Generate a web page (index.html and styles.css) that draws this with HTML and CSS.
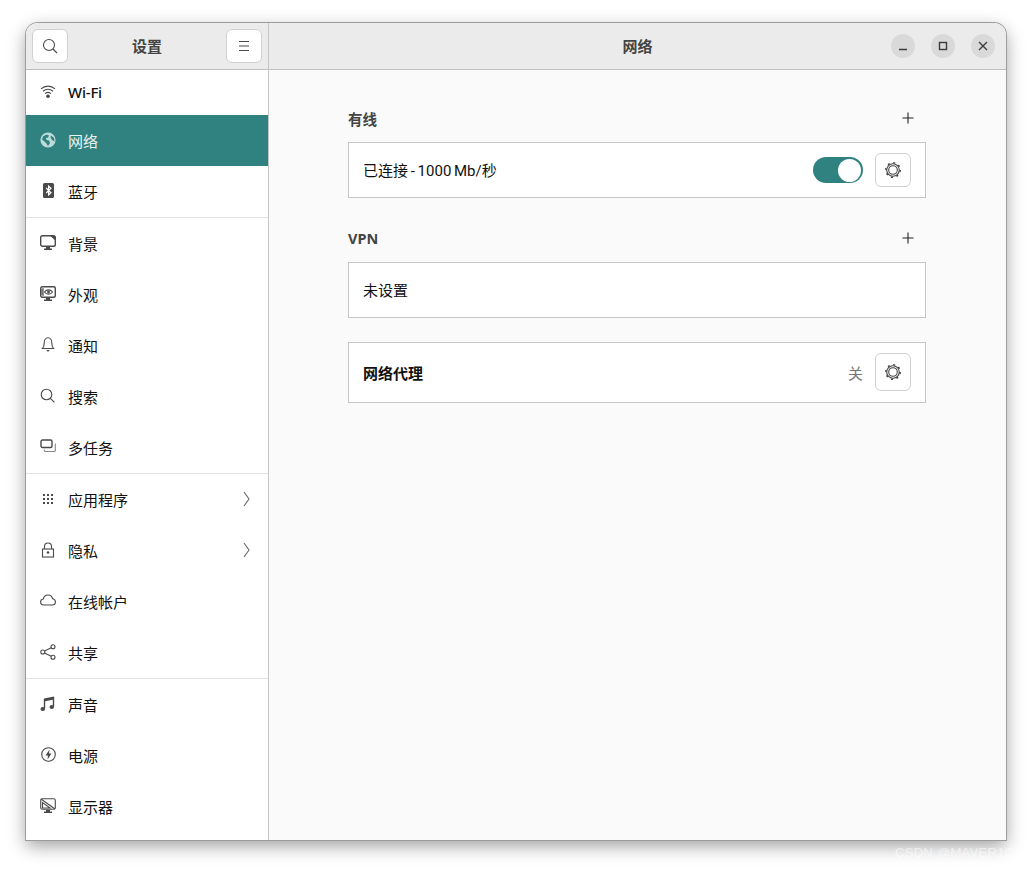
FILE: index.html
```html
<!DOCTYPE html>
<html lang="zh-CN">
<head>
    <meta charset="UTF-8">
    <title>设置 - 网络</title>
    <link rel="stylesheet" href="styles.css">
</head>
<body>
    <div class="window">
        <aside class="sidebar">
            <header class="side-header">
                <button class="head-btn">
                    <svg class="icon" viewBox="0 0 16 16"><circle cx="7" cy="7" r="5.500" class="line thin"/><path d="M11 11l4 4" class="line thin"/></svg>
                </button>
                <span class="head-title">设置</span>
                <button class="head-btn">
                    <svg class="icon" viewBox="0 0 16 16"><path d="M3 3.500h10M3 8h10M3 12.500h10" class="line thin"/></svg>
                </button>
            </header>
            <nav class="nav">
                <div class="nav-group">
                    <div class="nav-item nav-item-first">
                        <svg class="icon" viewBox="0 0 16 16"><path d="M1 4.800C5 1.200 11 1.200 15 4.800M3 7.200C6 4.800 10 4.800 13 7.200M5 9.600C6.800 8.200 9.200 8.200 11 9.600" class="line thin"/><circle cx="8" cy="12.200" r="1.800" class="fill"/></svg>
                        <span class="latin">Wi-Fi</span>
                    </div>
                    <div class="nav-item selected">
                        <svg class="icon" viewBox="0 0 16 16"><circle cx="8" cy="8" r="7.600" class="fill"/><path d="M3 4.500L6.500 2.500L9 3.500L8 5.500L6 6L6.500 8L9 8.500L10 11L8 14L6.500 11.500L4.500 9.500L2 7.500ZM11 3.500L14 6L14.500 9.500L12 8L10.500 5.500Z" class="cut"/></svg>
                        <span>网络</span>
                    </div>
                    <div class="nav-item">
                        <svg class="icon" viewBox="0 0 16 16"><rect x="3" y="0" width="11" height="15" rx="1.500" class="fill"/><path d="M6.200 5L11 9.800L8.600 12V3L11 5.200L6.200 10" class="line white"/></svg>
                        <span>蓝牙</span>
                    </div>
                </div>
                <div class="nav-group">
                    <div class="nav-item">
                        <svg class="icon" viewBox="0 0 16 16"><rect x="0.700" y="0.700" width="14.600" height="10.600" rx="1.800" class="line"/><path d="M10 0.700h3.500a1.800 1.800 0 0 1 1.800 1.800v3z" class="fill"/><path d="M6 12h4v1.500h2V15H4v-1.500h2z" class="fill"/></svg>
                        <span>背景</span>
                    </div>
                    <div class="nav-item">
                        <svg class="icon" viewBox="0 0 16 16"><rect x="0.700" y="0.700" width="14.600" height="10.600" rx="1.500" class="line"/><path d="M3 2v8M1 4h2M1 6h2M1 8h2" class="line thin"/><path d="M4.500 6C6.500 3.200 10.500 3.200 12.500 6C10.500 8.800 6.500 8.800 4.500 6Z" class="line thin"/><circle cx="8.500" cy="6" r="1.400" class="fill"/><path d="M6 12h4v1.500h2V15H4v-1.500h2z" class="fill"/></svg>
                        <span>外观</span>
                    </div>
                    <div class="nav-item">
                        <svg class="icon" viewBox="0 0 16 16"><path d="M2.500 11.500C3.800 10.200 4.200 9.200 4.200 6C4.200 2.800 6 .7 8 .7C10 .7 11.800 2.800 11.800 6C11.800 9.200 12.200 10.200 13.500 11.500Z" class="line thin"/><path d="M6.800 13h2.400v1.400H6.800z" class="fill"/></svg>
                        <span>通知</span>
                    </div>
                    <div class="nav-item">
                        <svg class="icon" viewBox="0 0 16 16"><circle cx="6.500" cy="6.500" r="5.300" class="line thin"/><path d="M10.400 10.400l4 4" class="line thin"/></svg>
                        <span>搜索</span>
                    </div>
                    <div class="nav-item">
                        <svg class="icon" viewBox="0 0 16 16"><rect x="1" y="1" width="11" height="7.500" rx="1.500" class="line"/><path d="M15.300 4.500v7a1 1 0 0 1-1 1h-9a1 1 0 0 1-1-1v-1" class="line thin soft"/></svg>
                        <span>多任务</span>
                    </div>
                </div>
                <div class="nav-group">
                    <div class="nav-item">
                        <svg class="icon" viewBox="0 0 16 16"><path d="M3 3h2v2H3zM7 3h2v2H7zM11 3h2v2h-2zM3 7h2v2H3zM7 7h2v2H7zM11 7h2v2h-2zM3 11h2v2H3zM7 11h2v2H7zM11 11h2v2h-2z" class="fill"/></svg>
                        <span>应用程序</span>
                        <svg class="chevron" viewBox="0 0 8 16"><path d="M1 1l5 7l-5 7" class="line thin"/></svg>
                    </div>
                    <div class="nav-item">
                        <svg class="icon" viewBox="0 0 16 16"><rect x="2.500" y="7" width="11" height="8" class="line thin"/><path d="M4.500 7V4.500a3.500 3.500 0 0 1 7 0V7" class="line thin"/><circle cx="8" cy="10.500" r="1.300" class="fill"/></svg>
                        <span>隐私</span>
                        <svg class="chevron" viewBox="0 0 8 16"><path d="M1 1l5 7l-5 7" class="line thin"/></svg>
                    </div>
                    <div class="nav-item">
                        <svg class="icon" viewBox="0 0 16 16"><path d="M4 12C2 12 .6 10.600 .6 9C.6 7.400 1.800 6.200 3.200 6C3.800 3.600 5.600 2 8 2C10.200 2 12 3.400 12.600 5.800C14.200 6 15.400 7.400 15.400 9C15.400 10.800 14 12 12.200 12Z" class="line thin"/></svg>
                        <span>在线帐户</span>
                    </div>
                    <div class="nav-item">
                        <svg class="icon" viewBox="0 0 16 16"><circle cx="2.800" cy="8" r="2" class="line thin"/><circle cx="13" cy="2.800" r="2" class="line thin"/><circle cx="13" cy="13.200" r="2" class="line thin"/><path d="M4.600 7L11.200 3.800M4.600 9L11.200 12.200" class="line thin"/></svg>
                        <span>共享</span>
                    </div>
                </div>
                <div class="nav-group">
                    <div class="nav-item">
                        <svg class="icon" viewBox="0 0 16 16"><path d="M4.500 3V12.500M13.500 1V10.500" class="line"/><path d="M4 2.500L14 .5V3.500L4 5.500Z" class="fill"/><ellipse cx="2.800" cy="13" rx="2.300" ry="2" class="fill"/><ellipse cx="11.800" cy="11" rx="2.300" ry="2" class="fill"/></svg>
                        <span>声音</span>
                    </div>
                    <div class="nav-item">
                        <svg class="icon" viewBox="0 0 16 16"><circle cx="8.500" cy="7.500" r="6.800" class="line thin"/><path d="M9.500 2.500L5.500 8.500h2.500L7.500 12.500l4-6H9z" class="fill"/></svg>
                        <span>电源</span>
                    </div>
                    <div class="nav-item">
                        <svg class="icon" viewBox="0 0 16 16"><rect x="0.700" y="0.700" width="14.600" height="10.600" rx="1.500" class="line thin"/><path d="M1 1L15 11M2.500 4.500V10H10Z" class="line thin"/><path d="M6 12h4v1.500h2V15H4v-1.500h2z" class="fill"/></svg>
                        <span>显示器</span>
                    </div>
                </div>
            </nav>
        </aside>

        <div class="panel">
            <header class="panel-header">
                <span class="head-title">网络</span>
                <div class="win-controls">
                    <button class="win-btn">
                        <svg class="win-icon" viewBox="0 0 16 16"><path d="M4 11.500h8" class="line"/></svg>
                    </button>
                    <button class="win-btn">
                        <svg class="win-icon" viewBox="0 0 16 16"><rect x="4.500" y="4.500" width="7" height="7" class="line"/></svg>
                    </button>
                    <button class="win-btn">
                        <svg class="win-icon" viewBox="0 0 16 16"><path d="M4 4l8 8M12 4l-8 8" class="line"/></svg>
                    </button>
                </div>
            </header>
            <main class="content">
                <div class="section-head">
                    <h2>有线</h2>
                    <svg class="plus" viewBox="0 0 12 12"><path d="M6 .5v11M.5 6h11" class="line thin"/></svg>
                </div>
                <div class="card">
                    <span class="card-text">已连接 - 1000 Mb/秒</span>
                    <span class="switch"><span class="knob"></span></span>
                    <button class="gear-btn">
                        <svg class="gear" viewBox="0 0 16 16"><circle cx="8" cy="8" r="6.300" class="line thin"/><circle cx="8" cy="8" r="4.300" class="line thin"/><circle cx="8" cy="8" r="7.200" class="teeth"/></svg>
                    </button>
                </div>

                <div class="section-head section-gap">
                    <h2>VPN</h2>
                    <svg class="plus" viewBox="0 0 12 12"><path d="M6 .5v11M.5 6h11" class="line thin"/></svg>
                </div>
                <div class="card">
                    <span class="card-text">未设置</span>
                </div>

                <div class="card card-tall">
                    <span class="card-text bold">网络代理</span>
                    <span class="status">关</span>
                    <button class="gear-btn gear-tall">
                        <svg class="gear" viewBox="0 0 16 16"><circle cx="8" cy="8" r="6.300" class="line thin"/><circle cx="8" cy="8" r="4.300" class="line thin"/><circle cx="8" cy="8" r="7.200" class="teeth"/></svg>
                    </button>
                </div>
            </main>
        </div>
    </div>
    <div class="watermark">CSDN @MAVER1CK</div>
</body>
</html>
```

FILE: styles.css
```css
html, body {
    height: 100%;
}
body {
    margin: 0;
    padding: 23px 0 0 26px;
    box-sizing: border-box;
    background-color: #fff;
    color: #111;
    font-family: "Noto Sans", "Noto Sans CJK SC", sans-serif;
    font-size: 15px;
    overflow: hidden;
}
button {
    padding: 0;
    border: none;
    background: none;
    font: inherit;
}

/* window */
.window {
    display: flex;
    width: 980px;
    height: 817px;
    background-color: #fafafa;
    border-radius: 12px 12px 0 0;
    box-shadow: 0 0 0 1px #9c9c9c, 0 6px 18px rgba(0, 0, 0, 0.38);
    overflow: hidden;
}

/* svg helpers */
.icon {
    display: block;
    flex: none;
    width: 16px;
    height: 16px;
    color: #4a4a4a;
}
.gear {
    display: block;
    width: 16px;
    height: 16px;
    color: #444;
}
.line {
    fill: none;
    stroke: currentColor;
    stroke-width: 1.4;
}
.line.thin {
    stroke-width: 1.1;
}
.line.soft {
    stroke: #888;
}
.line.white {
    stroke: #fff;
    stroke-width: 1.2;
}
.fill {
    fill: currentColor;
}
.cut {
    fill: #308280;
}
.teeth {
    fill: none;
    stroke: currentColor;
    stroke-width: 1.500;
    stroke-dasharray: 2 3.650;
}

/* sidebar */
.sidebar {
    display: flex;
    flex-direction: column;
    flex: none;
    width: 243px;
    background-color: #fff;
    border-right: 1px solid #c4c4c4;
    box-sizing: border-box;
}
.side-header {
    display: flex;
    align-items: center;
    justify-content: space-between;
    flex: none;
    height: 47px;
    padding: 0 6px;
    box-sizing: border-box;
    background-color: #ebebeb;
    border-bottom: 1px solid #c0c0c0;
}
.head-title {
    margin-bottom: 2px;
    font-weight: 700;
    color: #444;
    font-size: 15px;
}
.head-btn {
    display: flex;
    align-items: center;
    justify-content: center;
    width: 36px;
    height: 34px;
    background-color: #fff;
    border: 1px solid #d0d0d0;
    border-radius: 6px;
    box-sizing: border-box;
}
.nav-group {
    border-bottom: 1px solid #e2e2e2;
}
.nav-group:last-child {
    border-bottom: none;
}
.nav-item {
    display: flex;
    align-items: center;
    gap: 12px;
    height: 51px;
    padding: 0 17px 0 14px;
}
.nav-item span {
    flex: 1;
}
.nav-item-first {
    height: 45px;
}
.nav-item .icon {
    margin-bottom: 1px;
}
.nav-item.selected {
    background-color: #308280;
    color: #e8f2f2;
}
.nav-item.selected .icon {
    color: #bcdcda;
}
.nav-item .latin {
    margin-bottom: 2px;
    font-weight: 500;
    font-size: 15px;
    letter-spacing: -0.2px;
}
.chevron {
    display: block;
    width: 8px;
    height: 16px;
    color: #666;
    margin-bottom: 1px;
}

/* right panel */
.panel {
    display: flex;
    flex-direction: column;
    flex: 1;
    min-width: 0;
}
.panel-header {
    display: flex;
    align-items: center;
    justify-content: center;
    position: relative;
    flex: none;
    height: 47px;
    box-sizing: border-box;
    background-color: #ebebeb;
    border-bottom: 1px solid #c0c0c0;
}
.win-controls {
    position: absolute;
    top: 11px;
    right: 11px;
    display: flex;
    gap: 16px;
}
.win-btn {
    display: flex;
    align-items: center;
    justify-content: center;
    width: 24px;
    height: 24px;
    background-color: #d9d9d9;
    border-radius: 50%;
}
.win-icon {
    display: block;
    width: 16px;
    height: 16px;
    color: #3c3c3c;
}
.content {
    width: 578px;
    margin-left: 79px;
    padding-top: 32px;
}
.section-head {
    display: flex;
    align-items: center;
    justify-content: space-between;
    height: 32px;
    margin-bottom: 8px;
    padding-right: 12px;
}
.section-gap {
    margin-top: 24px;
}
.section-head h2 {
    margin: 0;
    font-size: 14.500px;
    font-weight: 700;
    color: #444;
}
.plus {
    display: block;
    width: 12px;
    height: 12px;
    color: #222;
}
.card {
    display: flex;
    align-items: center;
    height: 56px;
    padding: 0 14px;
    box-sizing: border-box;
    background-color: #fff;
    border: 1px solid #c6c6c6;
}
.card-tall {
    height: 61px;
    margin-top: 24px;
}
.card-text {
    flex: 1;
    margin-bottom: 2px;
    font-family: Roboto, "Noto Sans CJK SC", sans-serif;
    word-spacing: -1px;
}
.bold {
    margin-bottom: 0;
    font-weight: 700;
}
.status {
    margin-right: 12px;
    color: #777;
}
.switch {
    display: flex;
    justify-content: flex-end;
    align-items: center;
    width: 50px;
    height: 26px;
    margin-right: 12px;
    padding: 0 2px;
    box-sizing: border-box;
    background-color: #308280;
    border-radius: 13px;
}
.knob {
    width: 23px;
    height: 23px;
    background-color: #fff;
    border-radius: 50%;
}
.gear-btn {
    display: flex;
    align-items: center;
    justify-content: center;
    flex: none;
    width: 36px;
    height: 34px;
    background-color: #fff;
    border: 1px solid #d0d0d0;
    border-radius: 6px;
    box-sizing: border-box;
}
.gear-tall {
    height: 38px;
    margin-bottom: 1px;
}

/* watermark over the window shadow */
.watermark {
    position: absolute;
    left: 895px;
    top: 845px;
    color: rgba(255, 255, 255, 0.55);
    font-family: "Liberation Sans", sans-serif;
    font-size: 13px;
    letter-spacing: 0.3px;
    white-space: nowrap;
}
```
